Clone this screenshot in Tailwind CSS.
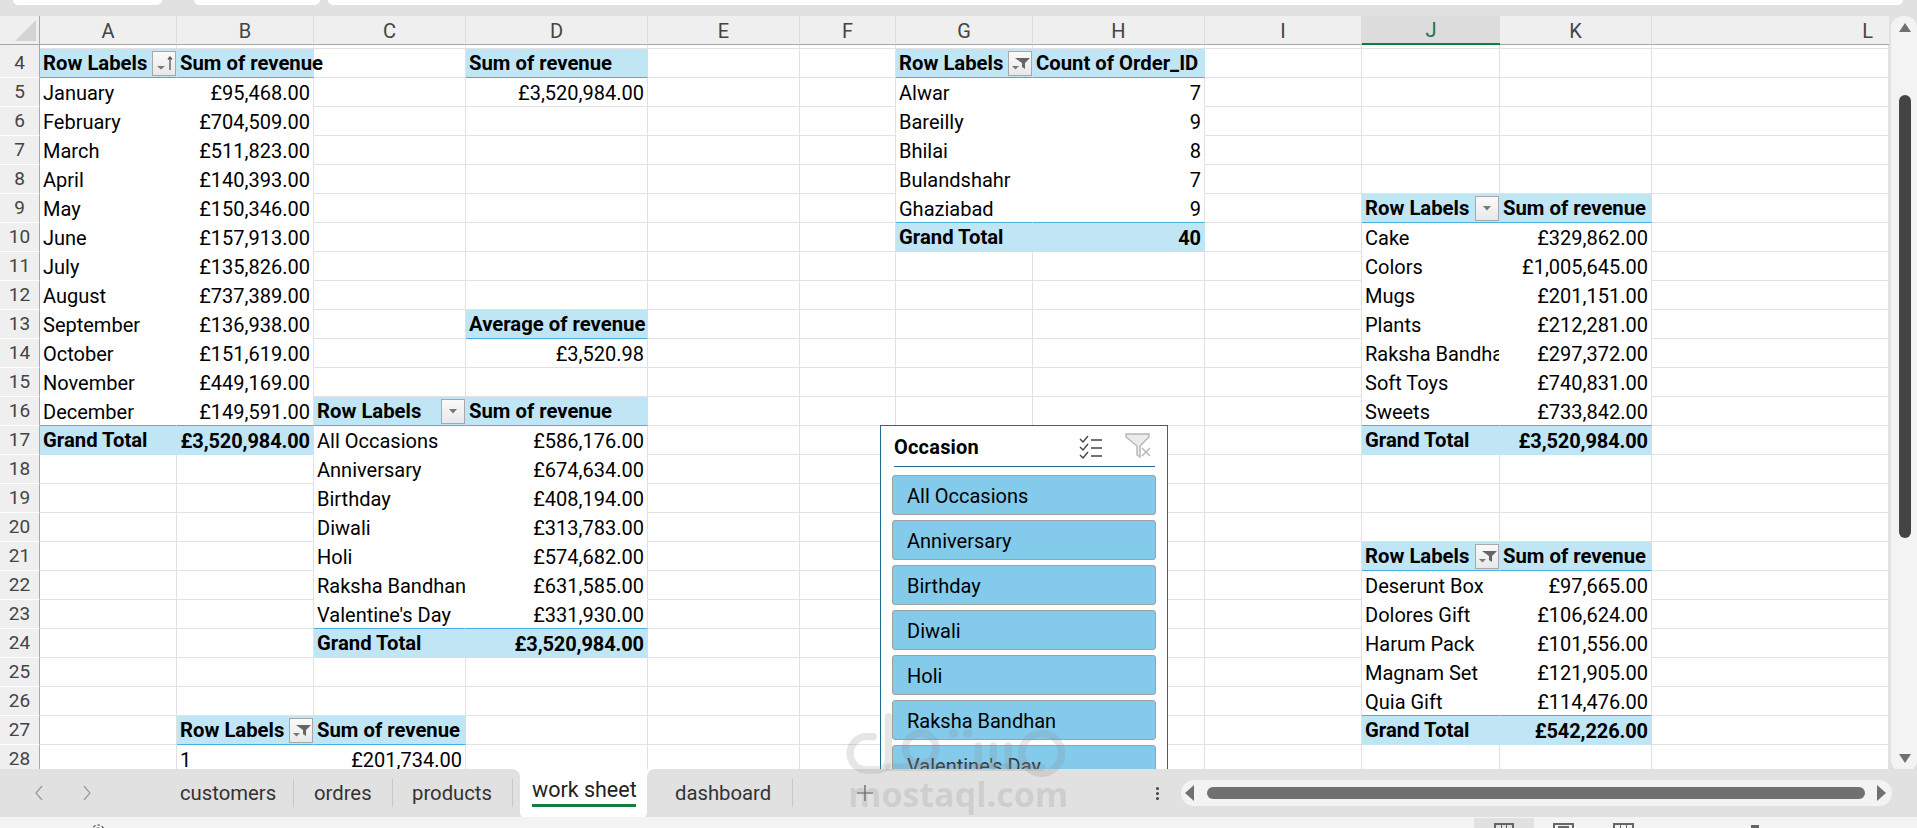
<!DOCTYPE html>
<html lang="en">
<head>
  <meta charset="UTF-8">
  <title>work sheet</title>
  <script src="https://cdn.jsdelivr.net/npm/@tailwindcss/browser@4"></script>
</head>
<body class="bg-[#e1e1e1] font-['Roboto',sans-serif] text-[20px] text-black">
  <div class="relative w-[1917px] h-[828px] overflow-hidden flex flex-col">

    <!-- top of the formula bar, cut off by the crop -->
    <div class="h-4 shrink-0 flex items-start gap-2 pl-[13px]">
      <div class="w-[149px] h-[5px] bg-white rounded-b-md"></div>
      <div class="w-[126px] h-[5px] bg-white rounded-b-md ml-6"></div>
      <div class="w-[1575px] h-[5px] bg-white rounded-b-md"></div>
    </div>

    <div class="relative flex-1 flex overflow-hidden">
      <div class="relative w-[1889px] bg-white overflow-hidden">
        <div id="sheet" class="grid grid-cols-[40px_137px_137px_152px_182px_152px_96px_137px_172px_157px_138px_152px_237px] grid-rows-[29px_4px_repeat(25,29px)]"></div>

        <!-- slicer -->
        <div class="absolute left-[880px] top-[409px] w-[288px] h-[400px] bg-white border border-[#1f6c93] pl-[12px] pr-[12px]">
          <div class="flex items-center h-[41px] pt-px border-b border-[#1f6c93] ml-px">
            <span class="font-bold text-[20px] tracking-[0.2px]">Occasion</span>
            <svg class="ml-auto mr-[22px]" width="24" height="24" viewBox="0 0 24 24" fill="none" stroke="#444" stroke-width="1.4">
              <path d="M1 4l3 3 5-6M1 12l3 3 5-6M1 20l3 3 5-6M12 5h11M12 13h11M12 21h11"/>
            </svg>
            <svg class="mr-[4px] mb-[2px]" width="26" height="26" viewBox="0 0 26 26" fill="none" stroke="#b5b5b5" stroke-width="1.4">
              <path d="M1 1h23v3l-9 9v11l-3-2v-9L1 4z" fill="#ececec"/>
              <path d="M17 15l8 8M25 15l-8 8"/>
            </svg>
          </div>
          <div class="flex flex-col gap-[5px] mt-2 -mx-px">
            <div class="h-10 flex items-center pl-[14px] pt-px bg-[#83caeb] border border-[#a0a0a0] rounded-[3px]">All Occasions</div>
            <div class="h-10 flex items-center pl-[14px] pt-px bg-[#83caeb] border border-[#a0a0a0] rounded-[3px]">Anniversary</div>
            <div class="h-10 flex items-center pl-[14px] pt-px bg-[#83caeb] border border-[#a0a0a0] rounded-[3px]">Birthday</div>
            <div class="h-10 flex items-center pl-[14px] pt-px bg-[#83caeb] border border-[#a0a0a0] rounded-[3px]">Diwali</div>
            <div class="h-10 flex items-center pl-[14px] pt-px bg-[#83caeb] border border-[#a0a0a0] rounded-[3px]">Holi</div>
            <div class="h-10 flex items-center pl-[14px] pt-px bg-[#83caeb] border border-[#a0a0a0] rounded-[3px]">Raksha Bandhan</div>
            <div class="h-10 flex items-center pl-[14px] pt-px bg-[#83caeb] border border-[#a0a0a0] rounded-[3px] text-[#333]">Valentine's Day</div>
          </div>
        </div>
      </div>

      <!-- vertical scrollbar -->
      <div class="relative w-[28px] pl-[2px]">
        <div class="relative h-[756px] bg-[#f3f3f3] rounded-t-xl rounded-b-xl">
          <div class="absolute left-[8px] top-[7px] w-0 h-0 border-x-[6px] border-x-transparent border-b-[9px] border-b-[#707070]"></div>
          <div class="absolute left-[8px] bottom-[9px] w-0 h-0 border-x-[6px] border-x-transparent border-t-[9px] border-t-[#707070]"></div>
          <div class="absolute left-[8px] top-[79px] w-[12px] h-[443px] bg-[#444] rounded-md"></div>
        </div>
      </div>
    </div>

    <!-- tab bar -->
    <div class="relative h-[48px] shrink-0 flex items-center text-[#333] text-[20.3px]">
      <div class="w-[180px] flex items-center gap-[38px] pl-[34px]">
        <svg width="10" height="16" viewBox="0 0 10 16" fill="none" stroke="#9a9a9a" stroke-width="1.2"><path d="M8 1L2 8l6 7"/></svg>
        <svg width="10" height="16" viewBox="0 0 10 16" fill="none" stroke="#9a9a9a" stroke-width="1.2"><path d="M2 1l6 7-6 7"/></svg>
      </div>
      <div class="w-[114px] h-[28px] pt-px flex items-center border-r border-[#c8c8c8]">customers</div>
      <div class="w-[99px] h-[28px] pt-px flex items-center pl-[20px] border-r border-[#c8c8c8]">ordres</div>
      <div class="w-[120px] h-[28px] pt-px flex items-center pl-[19px] border-r border-[#c8c8c8]">products</div>
      <div class="relative w-[127px] h-[51px] ml-[7px] self-start bg-white rounded-b-lg pl-[12px] pt-[5px] text-[#222] text-[21.5px]">
        <div class="absolute -left-2 top-0 size-2 bg-white"><div class="size-2 bg-[#e1e1e1] rounded-tr-lg"></div></div>
        <div class="absolute -right-2 top-0 size-2 bg-white"><div class="size-2 bg-[#e1e1e1] rounded-tl-lg"></div></div>
        work sheet
        <div class="absolute left-[12px] top-[35px] w-[104px] h-[3px] bg-[#107c41]"></div>
      </div>
      <div class="w-[146px] h-[28px] pt-px flex items-center pl-[28px] border-r border-[#c8c8c8]">dashboard</div>
      <svg class="ml-[62px]" width="20" height="20" viewBox="0 0 20 20" stroke="#555" stroke-width="1.2"><path d="M10 2v16M2 10h16"/></svg>
      <div class="ml-[281px] flex flex-col gap-[2px]">
        <span class="size-[3px] bg-[#444] rounded-full"></span>
        <span class="size-[3px] bg-[#444] rounded-full"></span>
        <span class="size-[3px] bg-[#444] rounded-full"></span>
      </div>
      <div class="relative ml-[22px] w-[711px] h-[26px] bg-[#f3f3f3] rounded-full">
        <div class="absolute left-[4px] top-[5px] w-0 h-0 border-y-[8px] border-y-transparent border-r-[9px] border-r-[#707070]"></div>
        <div class="absolute right-[6px] top-[5px] w-0 h-0 border-y-[8px] border-y-transparent border-l-[9px] border-l-[#707070]"></div>
        <div class="absolute left-[26px] top-[7px] w-[658px] h-[12px] bg-[#707070] rounded-md"></div>
      </div>
    </div>

    <!-- status bar, cut off by the crop -->
    <div class="relative h-[11px] shrink-0 bg-[#f3f3f3] flex items-start overflow-hidden">
      <svg class="ml-[90px] mt-[6px]" width="16" height="16" viewBox="0 0 16 16" fill="none" stroke="#444" stroke-width="1.2"><circle cx="8" cy="8" r="3"/><circle cx="8" cy="8" r="6" stroke-dasharray="2.5 2"/></svg>
      <div class="ml-[1368px] w-[60px] h-[10px] mt-px bg-[#e1e1e1] flex justify-center">
        <div class="w-[20px] h-[8px] mt-[5px] border-2 border-[#666] flex justify-evenly"><span class="w-px bg-[#666]"></span><span class="w-px bg-[#666]"></span></div>
      </div>
      <div class="w-[21px] h-[8px] mt-[6px] ml-[19px] border-2 border-[#666] flex justify-center pt-[1px]"><span class="w-[11px] h-[2px] bg-[#666]"></span></div>
      <div class="w-[21px] h-[8px] mt-[6px] ml-[39px] border-2 border-[#666] flex justify-evenly"><span class="w-px bg-[#666]"></span><span class="w-px bg-[#666]"></span></div>
      <div class="w-[8px] h-[6px] mt-[8px] ml-[117px] bg-[#666]"></div>
    </div>

    <!-- watermark over the page -->
    <svg class="absolute left-[830px] top-[710px] pointer-events-none" width="260" height="118" viewBox="0 0 780 354" fill="none" stroke="#8d8d8d" stroke-opacity="0.22" stroke-width="22" stroke-linecap="round">
      <path d="M175 20v130q0 30-40 30h-25a50 50 0 1 1 0-100h20"/>
      <path d="M175 172h460"/>
      <circle cx="272" cy="115" r="46"/>
      <path d="M370 70h2M412 70h2" stroke-width="26"/>
      <path d="M445 108v60M490 108v60M535 108v60"/>
      <circle cx="635" cy="130" r="60"/>
    </svg>
    <div class="absolute left-[848px] top-[776px] font-['Open_Sans',sans-serif] font-bold text-[34px] leading-[36px] text-[#8d8d8d]/22 pointer-events-none">mostaql.com</div>
  </div>

  <script>
    const columns = ['', 'A', 'B', 'C', 'D', 'E', 'F', 'G', 'H', 'I', 'J', 'K', 'L'];

    const funnel = '<path d="M6 6h15l-5 5v6l-3-2v-4z" fill="#666"/><path d="M3 14h7l-3.5 3.5z" fill="#777"/>';
    const caret = '<path d="M7 9h8l-4 4.5z" fill="#777"/>';
    const sorted = '<path d="M4 14h8l-4 3.5z" fill="#777"/><path d="M17 18V5M15 7.5l2-2.5 2 2.5" fill="none" stroke="#555" stroke-width="1.3"/>';

    function filterBtn(icon) {
      return `<span class="absolute right-0 top-[2px] w-[24px] h-[25px] bg-linear-to-b from-[#fafafa] to-[#e8e8e8] border border-[#a8a8a8] flex items-center justify-center"><svg width="22" height="23" viewBox="0 0 22 23">${icon}</svg></span>`;
    }

    // cells by address: [text, kind, button icon]
    const cells = {};

    function addPivot(c1, c2, row, head2, btn, rows, total) {
      cells[c1 + row] = ['Row Labels', 'head', btn];
      cells[c2 + row] = [head2, 'head'];
      rows.forEach((r, i) => {
        const last = i === rows.length - 1 && total;
        cells[c1 + (row + 1 + i)] = [r[0], last ? 'lastLeft' : 'left'];
        cells[c2 + (row + 1 + i)] = [r[1], last ? 'lastRight' : 'right'];
      });
      if (total) {
        const t = row + 1 + rows.length;
        cells[c1 + t] = ['Grand Total', 'total'];
        cells[c2 + t] = [total, 'totalRight'];
      }
    }

    addPivot('A', 'B', 4, 'Sum of revenue', sorted, [
      ['January', '£95,468.00'], ['February', '£704,509.00'], ['March', '£511,823.00'], ['April', '£140,393.00'],
      ['May', '£150,346.00'], ['June', '£157,913.00'], ['July', '£135,826.00'], ['August', '£737,389.00'],
      ['September', '£136,938.00'], ['October', '£151,619.00'], ['November', '£449,169.00'], ['December', '£149,591.00']
    ], '£3,520,984.00');
    addPivot('C', 'D', 16, 'Sum of revenue', caret, [
      ['All Occasions', '£586,176.00'], ['Anniversary', '£674,634.00'], ['Birthday', '£408,194.00'], ['Diwali', '£313,783.00'],
      ['Holi', '£574,682.00'], ['Raksha Bandhan', '£631,585.00'], ["Valentine's Day", '£331,930.00']
    ], '£3,520,984.00');
    addPivot('B', 'C', 27, 'Sum of revenue', funnel, [['1', '£201,734.00']]);
    addPivot('G', 'H', 4, 'Count of Order_ID', funnel, [
      ['Alwar', '7'], ['Bareilly', '9'], ['Bhilai', '8'], ['Bulandshahr', '7'], ['Ghaziabad', '9']
    ], '40');
    addPivot('J', 'K', 9, 'Sum of revenue', caret, [
      ['Cake', '£329,862.00'], ['Colors', '£1,005,645.00'], ['Mugs', '£201,151.00'], ['Plants', '£212,281.00'],
      ['Raksha Bandhan', '£297,372.00'], ['Soft Toys', '£740,831.00'], ['Sweets', '£733,842.00']
    ], '£3,520,984.00');
    addPivot('J', 'K', 21, 'Sum of revenue', funnel, [
      ['Deserunt Box', '£97,665.00'], ['Dolores Gift', '£106,624.00'], ['Harum Pack', '£101,556.00'],
      ['Magnam Set', '£121,905.00'], ['Quia Gift', '£114,476.00']
    ], '£542,226.00');
    cells.D4 = ['Sum of revenue', 'head'];
    cells.D5 = ['£3,520,984.00', 'value'];
    cells.D13 = ['Average of revenue', 'head'];
    cells.D14 = ['£3,520.98', 'value'];

    const base = 'relative flex items-center whitespace-nowrap px-[3px] pt-px border-r border-b ';
    const kinds = {
      empty: 'border-r-[#e1e1e1] border-b-[#e1e1e1]',
      head: 'font-bold text-[20.3px] bg-[#c0e6f5] border-r-[#c0e6f5] border-b-[#45b0e1]',
      left: 'bg-white border-r-white border-b-white',
      right: 'justify-end bg-white border-r-[#e1e1e1] border-b-white',
      lastLeft: 'bg-white border-r-white border-b-[#45b0e1]',
      lastRight: 'justify-end bg-white border-r-[#e1e1e1] border-b-[#45b0e1]',
      value: 'justify-end bg-white border-r-[#e1e1e1] border-b-[#e1e1e1]',
      total: 'font-bold text-[20.3px] bg-[#c0e6f5] border-r-[#c0e6f5] border-b-[#c0e6f5]',
      totalRight: 'justify-end font-bold tracking-[-0.1px] bg-[#c0e6f5] border-r-[#c0e6f5] border-b-[#c0e6f5]'
    };

    let html = '<div class="bg-[#efefef] border-r border-b border-[#a8a8a8] overflow-hidden"><div class="w-0 h-0 mt-[4px] ml-[15px] border-l-[21px] border-l-transparent border-b-[21px] border-b-[#d4d4d4]"></div></div>';
    columns.slice(1, 13).forEach(c => {
      html += c === 'J'
        ? `<div class="flex items-center justify-center pt-px bg-[#dcdcdc] border-b-2 border-[#107c41] text-[#217346]">${c}</div>`
        : c === 'L'
          ? `<div class="flex items-center justify-end pr-4 pt-px bg-[#efefef] border-b border-[#a8a8a8] text-[#444]">${c}</div>`
          : `<div class="flex items-center justify-center pt-px bg-[#efefef] border-r border-b border-r-[#dcdcdc] border-b-[#a8a8a8] text-[#444]">${c}</div>`;
    });

    // sliver of the hidden row under the frozen header
    html += '<div class="bg-[#efefef] border-r border-[#a8a8a8]"></div>';
    for (let i = 1; i < 13; i++) html += '<div class="border-r border-b border-r-[#e1e1e1] border-b-[#e1e1e1]"></div>';

    for (let row = 4; row <= 28; row++) {
      html += `<div class="flex items-center justify-center pt-px bg-[#efefef] border-r border-b border-r-[#a8a8a8] border-b-white text-[#444] text-[19px]">${row}</div>`;
      for (let i = 1; i < 13; i++) {
        const c = columns[i];
        const cell = cells[c + row];
        if (!cell) {
          html += `<div class="${base}${kinds.empty}"></div>`;
          continue;
        }
        // text is cut off only where the next cell to the right holds something
        const clip = cells[columns[i + 1] + row] && !cell[2] ? ' overflow-hidden' : '';
        html += `<div class="${base}${kinds[cell[1]]}${clip}"><span class="relative z-10">${cell[0]}</span>${cell[2] ? filterBtn(cell[2]) : ''}</div>`;
      }
    }
    document.getElementById('sheet').innerHTML = html;
  </script>
</body>
</html>
